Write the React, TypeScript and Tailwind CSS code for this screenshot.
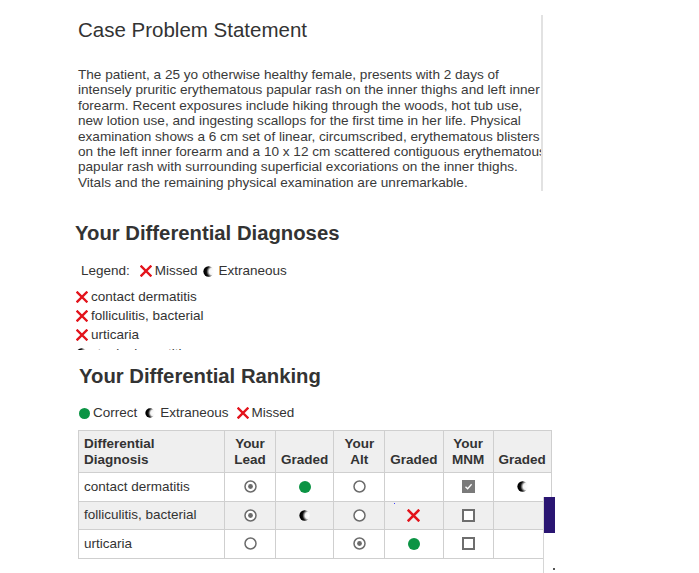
import React from "react";

function RedX({ size = 12 }: { size?: number }) {
  return (
    <svg width={size} height={size} viewBox="0 0 12 12" className="inline-block shrink-0">
      <path d="M1.5 1.5 L10.5 10.5 M10.5 1.5 L1.5 10.5" stroke="#e3131b" strokeWidth="2.4" strokeLinecap="square" />
    </svg>
  );
}

function Moon({ size = 11, id }: { size?: number; id: string }) {
  return (
    <svg width={size} height={size} viewBox="0 0 12 12" className="inline-block shrink-0">
      <defs>
        <radialGradient id={id} cx="0.9" cy="0.5" r="0.75">
          <stop offset="0" stopColor="#fff" />
          <stop offset="0.45" stopColor="#f4f4f4" />
          <stop offset="0.8" stopColor="#111" />
          <stop offset="1" stopColor="#000" />
        </radialGradient>
      </defs>
      <circle cx="6" cy="6" r="5.6" fill={`url(#${id})`} />
    </svg>
  );
}

function GreenDot({ size = 12 }: { size?: number }) {
  return <span className="inline-block shrink-0 rounded-full bg-[#0b9444]" style={{ width: size, height: size }} />;
}

function Radio({ on }: { on?: boolean }) {
  return (
    <svg width="13" height="13" viewBox="0 0 13 13" className="inline-block">
      <circle cx="6.5" cy="6.5" r="5.5" fill="#fff" stroke="#6b6b6b" strokeWidth="1.5" />
      {on && <circle cx="6.5" cy="6.5" r="2.4" fill="#6b6b6b" />}
    </svg>
  );
}

function Check({ on }: { on?: boolean }) {
  return on ? (
    <svg width="13" height="13" viewBox="0 0 13 13" className="inline-block">
      <rect x="0" y="0" width="13" height="13" fill="#7a7a7a" />
      <path d="M3.5 6.8 L5.6 8.8 L9.6 4.3" stroke="#fff" strokeWidth="1.3" fill="none" />
    </svg>
  ) : (
    <svg width="13" height="13" viewBox="0 0 13 13" className="inline-block">
      <rect x="1" y="1" width="11" height="11" fill="#fff" stroke="#6e6e6e" strokeWidth="2" />
    </svg>
  );
}

const caseLines = [
  "The patient, a 25 yo otherwise healthy female, presents with 2 days of",
  "intensely pruritic erythematous papular rash on the inner thighs and left inner",
  "forearm. Recent exposures include hiking through the woods, hot tub use,",
  "new lotion use, and ingesting scallops for the first time in her life. Physical",
  "examination shows a 6 cm set of linear, circumscribed, erythematous blisters",
  "on the left inner forearm and a 10 x 12 cm scattered contiguous erythematous",
  "papular rash with surrounding superficial excoriations on the inner thighs.",
  "Vitals and the remaining physical examination are unremarkable.",
];

const missed = ["contact dermatitis", "folliculitis, bacterial", "urticaria"];

type Row = {
  name: string;
  lead: boolean;
  leadGrade?: "correct" | "extra" | "missed";
  alt: boolean;
  altGrade?: "correct" | "extra" | "missed";
  mnm: boolean;
  mnmGrade?: "correct" | "extra" | "missed";
};

const rows: Row[] = [
  { name: "contact dermatitis", lead: true, leadGrade: "correct", alt: false, mnm: true, mnmGrade: "extra" },
  { name: "folliculitis, bacterial", lead: true, leadGrade: "extra", alt: false, altGrade: "missed", mnm: false },
  { name: "urticaria", lead: false, alt: true, altGrade: "correct", mnm: false },
];

function Grade({ g, id }: { g?: Row["leadGrade"]; id: string }) {
  if (g === "correct") return <GreenDot />;
  if (g === "extra") return <Moon id={id} />;
  if (g === "missed") return <RedX size={13} />;
  return null;
}

export default function App() {
  const th = "border border-[#cfcfcf] px-[5px] py-[3px] text-center align-middle font-bold leading-[16px]";
  const td = "border border-[#cfcfcf] p-0 text-center align-middle";
  return (
    <div className="relative h-[573px] w-[699px] overflow-hidden bg-white font-['Liberation_Sans',Arial,sans-serif] text-[13.5px] text-[#333]">
      <section className="ml-[60px] mt-[15px] h-[176px] w-[483px] overflow-hidden border-r-2 border-[#e2e2e2] pl-[18px] pt-[3px]">
        <h1 className="text-[20.5px] leading-[24px] text-[#333]">Case Problem Statement</h1>
        <div className="mt-[25px] text-[13.6px] leading-[15.4px] text-[#3a3a3a]">
          {caseLines.map((l) => (
            <div key={l} className="whitespace-nowrap">
              {l}
            </div>
          ))}
        </div>
      </section>

      <h2 className="ml-[75px] mt-[30px] text-[20.3px] font-bold leading-[24px] text-[#333]">Your Differential Diagnoses</h2>
      <div className="ml-[81px] mt-[17px] flex items-center gap-[3px] leading-[18px]">
        <span className="mr-[7px]">Legend:</span>
        <RedX />
        <span>Missed</span>
        <span className="ml-[2px] flex">
          <Moon id="lg1" />
        </span>
        <span className="ml-[2px]">Extraneous</span>
      </div>
      <ul className="ml-[76px] mt-[7px] h-[63px] overflow-hidden leading-[19px]">
        {missed.map((m) => (
          <li key={m} className="flex items-center gap-[3px]">
            <RedX />
            <span>{m}</span>
          </li>
        ))}
        <li className="flex items-center gap-[3px]">
          <Moon id="lg-atopic" />
          <span>atopic dermatitis</span>
        </li>
      </ul>

      <h2 className="ml-[79px] mt-[14px] text-[20.3px] font-bold leading-[24px] text-[#333]">Your Differential Ranking</h2>
      <div className="ml-[79px] mt-[16px] flex items-center leading-[18px]">
        <GreenDot size={11} />
        <span className="ml-[3px]">Correct</span>
        <span className="ml-[8px]">
          <Moon id="lg2" size={10} />
        </span>
        <span className="ml-[5px]">Extraneous</span>
        <span className="ml-[8px]">
          <RedX />
        </span>
        <span className="ml-[3px]">Missed</span>
      </div>

      <table className="ml-[78px] mt-[8px] table-fixed border-collapse border border-[#cfcfcf] text-[#333]">
        <colgroup>
          <col className="w-[146px]" />
          <col className="w-[51px]" />
          <col className="w-[58px]" />
          <col className="w-[51px]" />
          <col className="w-[58px]" />
          <col className="w-[50px]" />
          <col className="w-[57px]" />
        </colgroup>
        <thead>
          <tr className="h-[42px] bg-[#efefef]">
            <th className={th + " text-left"}>
              Differential
              <br />
              Diagnosis
            </th>
            <th className={th}>
              Your
              <br />
              Lead
            </th>
            <th className={th + " pt-[19px]"}>Graded</th>
            <th className={th}>
              Your
              <br />
              Alt
            </th>
            <th className={th + " pt-[19px]"}>Graded</th>
            <th className={th}>
              Your
              <br />
              MNM
            </th>
            <th className={th + " pt-[19px]"}>Graded</th>
          </tr>
        </thead>
        <tbody>
          {rows.map((r, i) => (
            <tr key={r.name} className={"h-[28.5px] " + (i === 1 ? "bg-[#efefef]" : "bg-white")}>
              <td className="border border-[#cfcfcf] px-[5px] text-left align-middle">{r.name}</td>
              <td className={td}>
                <div className="flex items-center justify-center">
                  <Radio on={r.lead} />
                </div>
              </td>
              <td className={td}>
                <div className="flex items-center justify-center">
                  <Grade g={r.leadGrade} id={"lead" + i} />
                </div>
              </td>
              <td className={td}>
                <div className="flex items-center justify-center">
                  <Radio on={r.alt} />
                </div>
              </td>
              <td className={td}>
                <div className="relative flex items-center justify-center">
                  {i === 1 && <span className="absolute left-[9px] top-[-6px] h-[1px] w-[1px] bg-[#4040ff]" />}
                  <Grade g={r.altGrade} id={"alt" + i} />
                </div>
              </td>
              <td className={td}>
                <div className="flex items-center justify-center">
                  <Check on={r.mnm} />
                </div>
              </td>
              <td className={td}>
                <div className="flex items-center justify-center">
                  <Grade g={r.mnmGrade} id={"mnm" + i} />
                </div>
              </td>
            </tr>
          ))}
        </tbody>
      </table>

      <div className="absolute left-[543px] top-[497px] h-[76px] w-[12px] border-l border-[#d6d6d6] bg-white">
        <div className="h-[36px] bg-[#2a1572]" />
        <div className="ml-[9px] mt-[35px] h-[2px] w-[2px] bg-[#555]" />
      </div>
    </div>
  );
}
